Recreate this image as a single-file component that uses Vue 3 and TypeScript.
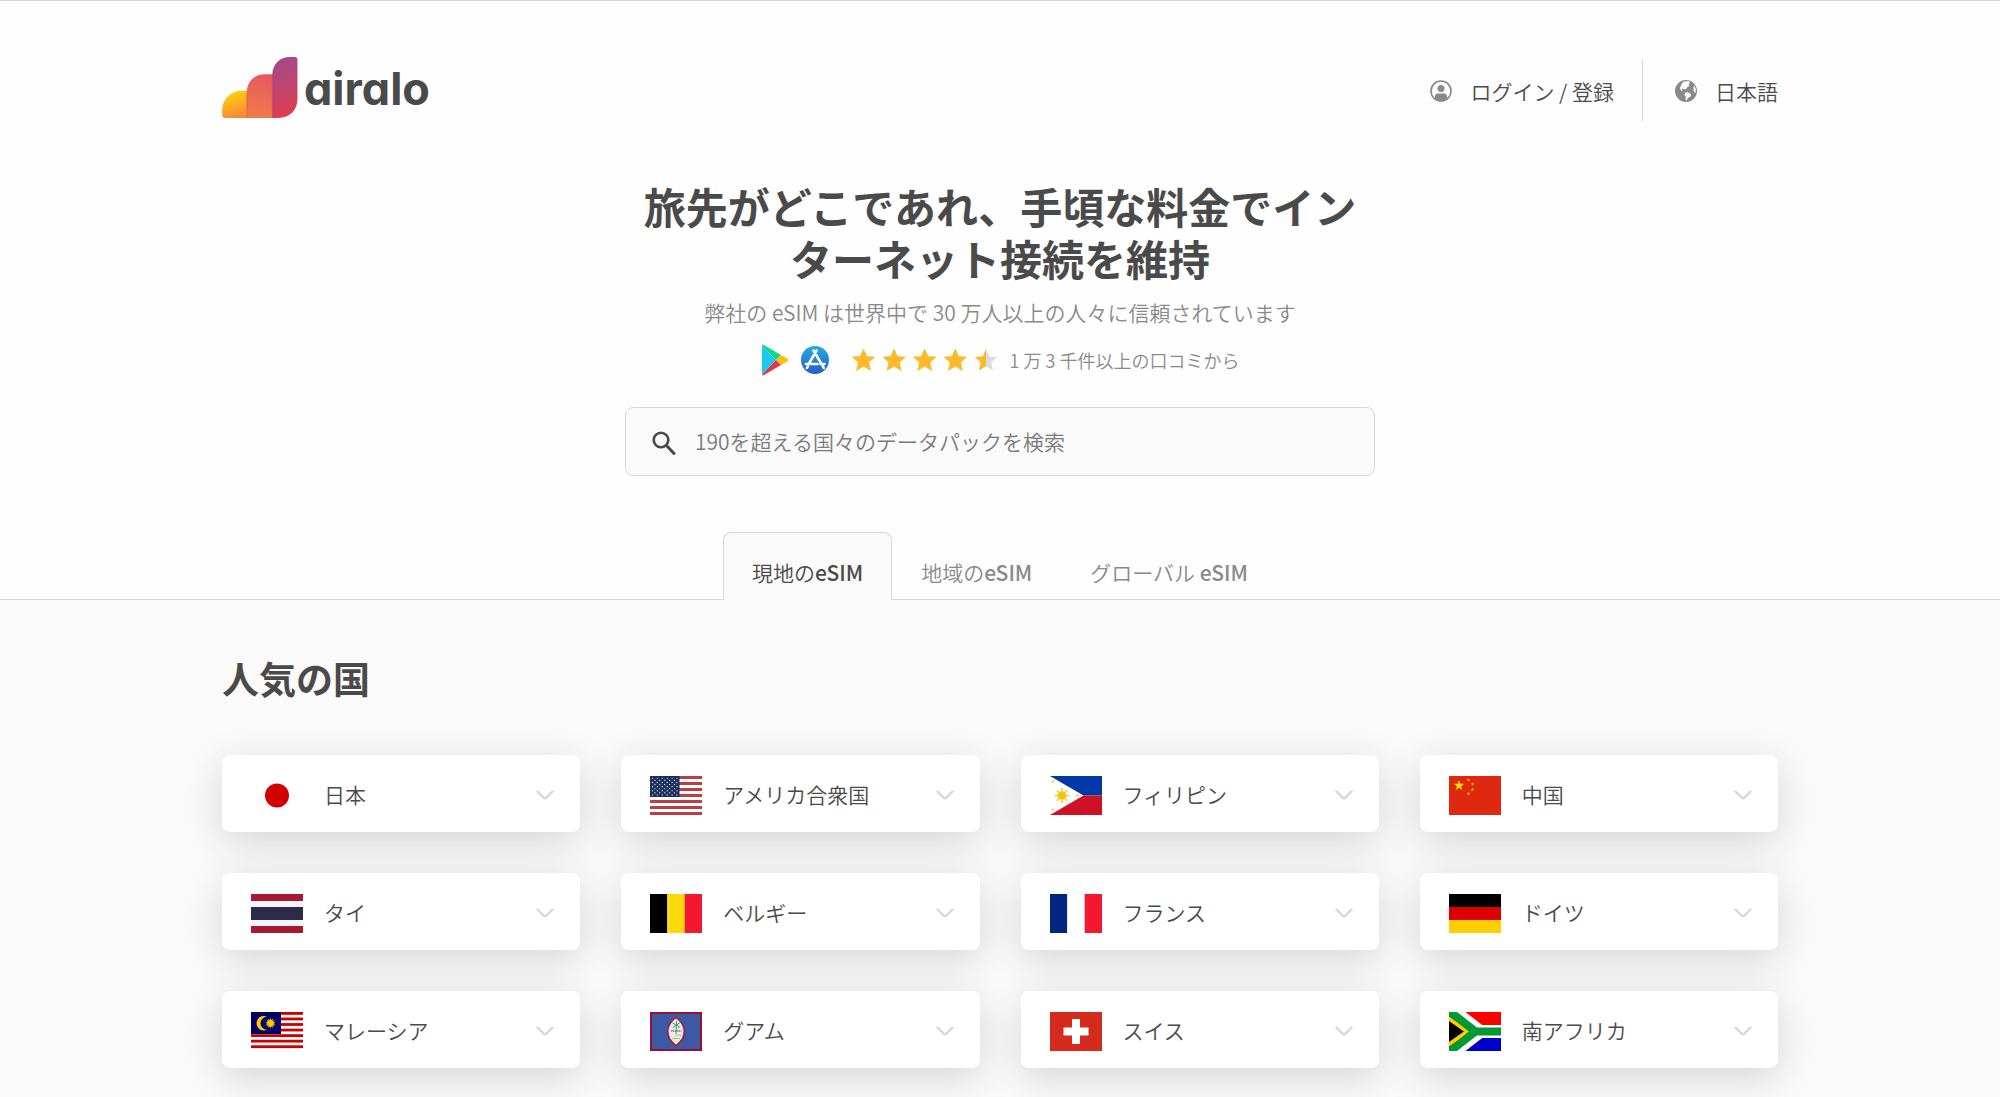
<script setup lang="ts">
import { ref } from 'vue'

interface Country {
  name: string
  flag: string
}

const rect = (x: number, y: number, w: number, h: number, fill: string): string =>
  `<rect x="${x}" y="${y}" width="${w}" height="${h}" fill="${fill}"/>`

const star = (cx: number, cy: number, r: number, fill: string, points = 5, inner = 0.4): string => {
  const pts: string[] = []
  for (let i = 0; i < points * 2; i++) {
    const radius = i % 2 === 0 ? r : r * inner
    const angle = (Math.PI * i) / points - Math.PI / 2
    pts.push(`${(cx + radius * Math.cos(angle)).toFixed(2)},${(cy + radius * Math.sin(angle)).toFixed(2)}`)
  }
  return `<polygon points="${pts.join(' ')}" fill="${fill}"/>`
}

// Every flag is drawn on a 104 x 78 canvas.
const stripes = (colors: string[], vertical = false): string =>
  colors
    .map((c, i) =>
      vertical
        ? rect((104 / colors.length) * i, 0, 104 / colors.length, 78, c)
        : rect(0, (78 / colors.length) * i, 104, 78 / colors.length, c),
    )
    .join('')

const usaFlag = (): string => {
  let out = stripes(Array.from({ length: 13 }, (_, i) => (i % 2 === 0 ? '#bd3d44' : '#ffffff')))
  out += rect(0, 0, 59, 42, '#192f5d')
  for (let row = 0; row < 9; row++) {
    const count = row % 2 === 0 ? 6 : 5
    for (let col = 0; col < count; col++) {
      out += star(5 + col * 9.8 + (row % 2) * 4.9, 4.4 + row * 4.2, 2, '#ffffff')
    }
  }
  return out
}

const malaysiaFlag = (): string => {
  let out = rect(0, 0, 104, 78, '#ffffff')
  for (let i = 0; i < 7; i++) out += rect(0, i * 11.1, 104, 5.6, '#cc0000')
  out += rect(0, 0, 60, 44, '#000066')
  out += '<path d="M32 9.500A14.500 14.500 0 1 0 32 35.500A12.500 12.500 0 1 1 32 9.500Z" fill="#ffcc00"/>'
  out += star(39, 22.5, 11, '#ffcc00', 14, 0.55)
  return out
}

const philippinesFlag = (): string =>
  rect(0, 0, 104, 39, '#0038a8') +
  rect(0, 39, 104, 39, '#ce1126') +
  '<path d="M0 0L67 39L0 78Z" fill="#ffffff"/>' +
  '<path d="M24 24V54M9 39H39M13.500 28.500L34.500 49.500M34.500 28.500L13.500 49.500" stroke="#f8d33c" stroke-width="3.500"/>' +
  '<circle cx="24" cy="39" r="8.500" fill="#f5c60c"/>' +
  star(6, 11, 4, '#fcd116') +
  star(6, 67, 4, '#fcd116') +
  star(55, 39, 4, '#fcd116')

const guamFlag = (): string =>
  rect(0, 0, 104, 78, '#be0027') +
  rect(3, 3, 98, 72, '#3b5aa3') +
  '<rect x="2.500" y="2.500" width="99" height="73" fill="none" stroke="#8d1535" stroke-width="3"/>' +
  '<path d="M52 11C74 27 74 51 52 67C30 51 30 27 52 11Z" fill="#e8ecec" stroke="#a8123a" stroke-width="3"/>' +
  '<path d="M41 48Q52 44 63 50Q60 58 52 63Q45 58 41 48Z" fill="#f0edbd"/>' +
  '<path d="M53 26L52 44M53 26L45 22M53 26L46 31M53 26L60 21M53 26L60 31M53 26V18" fill="none" stroke="#30a46c" stroke-width="2"/>' +
  '<path d="M42 38H63" stroke="#b0607c" stroke-width="3" stroke-dasharray="3 1"/>' +
  '<path d="M51 46H63M45 53H60" stroke="#8cc8a8" stroke-width="2"/>'

const southAfricaFlag = (): string =>
  rect(0, 0, 104, 39, '#ff0000') +
  rect(0, 39, 104, 39, '#0000cc') +
  '<path d="M0 -9L62 39L0 87M60 39H104" fill="none" stroke="#ffffff" stroke-width="26"/>' +
  '<path d="M0 0L52 39L0 78Z" fill="#000000"/>' +
  '<path d="M-6 9L37 39L-6 69" fill="none" stroke="#ffcc00" stroke-width="8"/>' +
  '<path d="M-2 -4L53 39L-2 82M50 39H104" fill="none" stroke="#009933" stroke-width="16"/>'

const countries: Country[] = [
  { name: '日本', flag: rect(0, 0, 104, 78, '#ffffff') + '<circle cx="52" cy="39" r="24" fill="#d30000"/>' },
  { name: 'アメリカ合衆国', flag: usaFlag() },
  { name: 'フィリピン', flag: philippinesFlag() },
  {
    name: '中国',
    flag:
      rect(0, 0, 104, 78, '#de2910') +
      star(20, 19, 11, '#ffde00') +
      star(39, 8, 3.5, '#ffde00') +
      star(47, 16, 3.5, '#ffde00') +
      star(47, 27, 3.5, '#ffde00') +
      star(39, 35, 3.5, '#ffde00'),
  },
  {
    name: 'タイ',
    flag: rect(0, 0, 104, 78, '#a51931') + rect(0, 14, 104, 50, '#f4f5f8') + rect(0, 26, 104, 26, '#2d2a4a'),
  },
  { name: 'ベルギー', flag: stripes(['#000000', '#ffd90c', '#f31830'], true) },
  { name: 'フランス', flag: stripes(['#00267f', '#ffffff', '#f31830'], true) },
  { name: 'ドイツ', flag: stripes(['#000000', '#dd0000', '#ffce00']) },
  { name: 'マレーシア', flag: malaysiaFlag() },
  { name: 'グアム', flag: guamFlag() },
  { name: 'スイス', flag: rect(0, 0, 104, 78, '#d52b1e') + rect(27, 31, 50, 16, '#fff') + rect(44, 14, 16, 50, '#fff') },
  { name: '南アフリカ', flag: southAfricaFlag() },
]

const tabs = ['現地の|eSIM', '地域の|eSIM', 'グローバル |eSIM'].map((t) => t.split('|'))
const activeTab = ref(0)
const query = ref('')
</script>

<template>
  <div class="page">
    <div class="hero">
      <header class="container header">
        <a class="logo" href="#">
          <svg class="logo-mark" viewBox="0 0 228 184" aria-hidden="true">
            <defs>
              <linearGradient id="sun" x1="0.3" y1="0" x2="0.6" y2="1">
                <stop offset="0" stop-color="#fdd60a" />
                <stop offset="0.45" stop-color="#fcb31c" />
                <stop offset="1" stop-color="#f4873a" />
              </linearGradient>
              <linearGradient id="coral" x1="0.5" y1="0" x2="0.4" y2="1">
                <stop offset="0" stop-color="#e4595f" />
                <stop offset="1" stop-color="#f07c48" />
              </linearGradient>
              <linearGradient id="plum" x1="0.4" y1="0" x2="0.6" y2="1">
                <stop offset="0" stop-color="#a34a85" />
                <stop offset="0.45" stop-color="#bb4672" />
                <stop offset="1" stop-color="#e23b4c" />
              </linearGradient>
            </defs>
            <path d="M0 174V160C0 128 26 102 58 102H76V184H10Q0 184 0 174Z" fill="url(#sun)" />
            <path d="M74 184V108C74 76 96 52 128 52H153V184Z" fill="url(#coral)" />
            <path d="M75 184V108M151 184V58" fill="none" stroke="#d9474f" stroke-opacity="0.7" stroke-width="2" />
            <path d="M151 184V54C151 22 174 0 204 0H219Q227 0 227 8V126C227 160 205 184 168 184Z" fill="url(#plum)" />
          </svg>
          <span class="logo-name">airalo</span>
        </a>
        <nav class="nav">
          <a class="nav-link" href="#">
            <svg class="nav-icon" viewBox="0 0 22 22" aria-hidden="true">
              <circle cx="11" cy="11" r="10" fill="none" stroke="#8a8a8a" stroke-width="1.600" />
              <circle cx="11" cy="8.600" r="3.500" fill="#8a8a8a" />
              <path d="M5 19.500V16.500Q5 13.500 8 13.500H14Q17 13.500 17 16.500V19.500Q11 23 5 19.500Z" fill="#8a8a8a" />
            </svg>
            ログイン / 登録
          </a>
          <a class="nav-link language" href="#">
            <svg class="nav-icon" viewBox="0 0 22 22" aria-hidden="true">
              <circle cx="11" cy="11" r="11" fill="#8a8a8a" />
              <path d="M7.500 2.500L10 1.200L14 1.300L15 2.800L13.500 4L14.500 5.500L12.500 7L11 9L9 9.300L8 8.500L6.500 9.500L8 11.500L6.500 11L4.800 8.500L6 5.500Z" fill="#fff" />
              <path d="M10 13L12.500 12L16 14.200L15.500 16.500L13 18L11.500 20.500L10.500 20L11 17L9.500 15Z" fill="#fff" />
              <path d="M18.500 7L19.500 5.800L20.800 9L20.500 13L19.500 12.500L18.500 10Z" fill="#fff" />
            </svg>
            日本語
          </a>
        </nav>
      </header>

      <main class="intro">
        <h1>旅先がどこであれ、手頃な料金でインターネット接続を維持</h1>
        <p class="tagline">弊社の eSIM は世界中で 30 万人以上の人々に信頼されています</p>
        <div class="rating">
          <svg class="store play" viewBox="0 0 28 32" aria-hidden="true">
            <path d="M1 1.500V30.500L15 16Z" fill="#1ec8f0" />
            <path d="M1 1.500Q1.500 0 3 1L20 11L15 16Z" fill="#12d98a" />
            <path d="M20 11L27 15Q28 16 27 17L20 21L15 16Z" fill="#ffc107" />
            <path d="M1 30.500Q1.500 32 3 31L20 21L15 16Z" fill="#e6364c" />
          </svg>
          <svg class="store" viewBox="0 0 28 28" aria-hidden="true">
            <defs>
              <linearGradient id="store" x1="0" y1="0" x2="0" y2="1">
                <stop offset="0" stop-color="#25a9e0" />
                <stop offset="1" stop-color="#2260c4" />
              </linearGradient>
            </defs>
            <circle cx="14" cy="14" r="14" fill="url(#store)" />
            <path d="M12.500 4.500L20.800 18.500M22 20.500L22.800 22M15.500 4.500L8 17.500M5 18H16.500M19.500 18H23.500M6.800 20.500L6 22" fill="none" stroke="#fff" stroke-width="2.600" stroke-linecap="round" />
          </svg>
          <svg class="stars" viewBox="0 0 145 24" role="img" aria-label="4.5">
            <defs>
              <linearGradient id="half">
                <stop offset="0.5" stop-color="#fdb92a" />
                <stop offset="0.5" stop-color="#dcdcdc" />
              </linearGradient>
            </defs>
            <path
              v-for="n in 5"
              :key="n"
              :transform="`translate(${(n - 1) * 30.6} 0)`"
              d="M11.500 1L14.800 8.400L22.700 9.100L16.800 14.300L18.500 22.500L11.500 18.300L4.500 22.500L6.200 14.300L0.300 9.100L8.200 8.400Z"
              :fill="n === 5 ? 'url(#half)' : '#fdb92a'"
              :stroke="n === 5 ? 'none' : '#fdb92a'"
              stroke-width="0.600"
              stroke-linejoin="round"
            />
          </svg>
          <span class="reviews">1 万 3 千件以上の口コミから</span>
        </div>
        <label class="search">
          <svg class="search-icon" viewBox="0 0 24 28" aria-hidden="true">
            <circle cx="9" cy="12" r="7.300" fill="none" stroke="#4a4a4a" stroke-width="2.600" />
            <path d="M14.500 17.500L22 25.500" stroke="#4a4a4a" stroke-width="3" stroke-linecap="round" />
          </svg>
          <input v-model="query" type="text" placeholder="190を超える国々のデータパックを検索" aria-label="190を超える国々のデータパックを検索" />
        </label>
        <div class="tabs" role="tablist">
          <button
            v-for="(tab, i) in tabs"
            :key="i"
            type="button"
            role="tab"
            class="tab"
            :class="{ active: i === activeTab }"
            :aria-selected="i === activeTab"
            @click="activeTab = i"
          >{{ tab[0] }}<span class="latin">{{ tab[1] }}</span></button>
        </div>
      </main>
    </div>

    <section class="container popular">
      <h2>人気の国</h2>
      <ul class="grid">
        <li v-for="country in countries" :key="country.name">
          <button type="button" class="card">
            <svg class="flag" viewBox="0 0 104 78" aria-hidden="true" v-html="country.flag" />
            <span class="name">{{ country.name }}</span>
            <svg class="chevron" viewBox="0 0 18 10" aria-hidden="true">
              <path d="M1.500 1.500L7.500 7.500Q9 8.800 10.500 7.500L16.500 1.500" fill="none" stroke="#d8d8d8" stroke-width="2.400" stroke-linecap="round" />
            </svg>
          </button>
        </li>
      </ul>
    </section>
  </div>
</template>

<style>
body {
  margin: 0;
  background: #fafafa;
}
</style>

<style scoped>
.page {
  color: #4a4a4a;
  font-family: "Noto Sans CJK JP", "Noto Sans", sans-serif;
  font-size: 21px;
  line-height: 28px;
  font-weight: 350;
}

.container {
  width: min(1556px, 100% - 64px);
  margin: 0 auto;
}

.hero {
  background: #fefefe;
  border-top: 1px solid #d8d8d8;
  border-bottom: 1px solid #d8d8d8;
}

.header {
  display: flex;
  justify-content: space-between;
  align-items: center;
  height: 67px;
  padding: 56px 0;
}

.logo {
  display: flex;
  align-items: flex-start;
  align-self: flex-start;
  gap: 6px;
  color: #4a4a4a;
  text-decoration: none;
}

.logo-mark {
  width: 76px;
  height: 61px;
}

.logo-name {
  font: 700 45px/64px Inter, sans-serif;
  font-feature-settings: "cv11";
}

.nav {
  display: flex;
  align-items: center;
}

.nav-link {
  display: flex;
  align-items: center;
  gap: 18px;
  color: inherit;
  text-decoration: none;
}

.nav-icon {
  width: 22px;
  height: 22px;
}

.language {
  height: 61px;
  margin-left: 28px;
  padding-left: 32px;
  border-left: 1px solid #d8d8d8;
}

.intro {
  display: flex;
  flex-direction: column;
  align-items: center;
}

h1 {
  max-width: 750px;
  margin: 0;
  font-size: 42px;
  line-height: 52px;
  font-weight: 700;
  text-align: center;
}

.tagline {
  margin: 14px 0 0;
  color: #8a8a8a;
}

.rating {
  display: flex;
  align-items: center;
  height: 32px;
  margin-top: 18px;
}

.store {
  width: 28px;
  height: 28px;
}

.play {
  height: 32px;
  margin-right: 12px;
}

.stars {
  width: 145px;
  height: 24px;
  margin: 0 13px 0 23px;
}

.reviews {
  color: #8a8a8a;
  font-size: 18px;
}

.search {
  display: flex;
  align-items: center;
  gap: 19px;
  box-sizing: border-box;
  width: min(750px, 100% - 32px);
  height: 69px;
  margin-top: 31px;
  padding: 0 26px;
  background: #fafafa;
  border: 1px solid #d8d8d8;
  border-radius: 8px;
}

.search-icon {
  width: 24px;
  height: 28px;
}

.search input {
  flex: 1;
  padding: 0 0 2px;
  border: 0;
  outline: 0;
  background: none;
  color: inherit;
  font: inherit;
}

.search input::placeholder {
  color: #7a7a7a;
}

.tabs {
  display: flex;
  margin: 56px 0 -1px;
}

.tab {
  height: 68px;
  padding: 10px 28px 0;
  border: 1px solid transparent;
  border-bottom: 0;
  border-radius: 8px 8px 0 0;
  background: none;
  color: #8a8a8a;
  font: inherit;
  white-space: pre;
}

.tab.active {
  background: #fafafa;
  border-color: #d8d8d8;
  color: #4a4a4a;
}

.latin {
  font-weight: 500;
}

.popular {
  padding: 52px 0 29px;
}

h2 {
  margin: 0 0 51px;
  font-size: 37px;
  line-height: 52px;
  font-weight: 700;
}

.grid {
  display: grid;
  grid-template-columns: repeat(4, 1fr);
  gap: 41px;
  margin: 0;
  padding: 0;
  list-style: none;
}

.card {
  display: flex;
  align-items: center;
  width: 100%;
  height: 77px;
  padding: 3px 26px 0 29px;
  border: 0;
  border-radius: 8px;
  background: #fff;
  box-shadow: 0 10px 40px rgba(0, 0, 0, 0.15);
  color: inherit;
  font: inherit;
}

.flag {
  width: 52px;
  height: 39px;
  margin-right: 21px;
}

.name {
  flex: 1;
  padding-bottom: 2px;
  text-align: left;
}

.chevron {
  width: 18px;
  height: 10px;
}
</style>
